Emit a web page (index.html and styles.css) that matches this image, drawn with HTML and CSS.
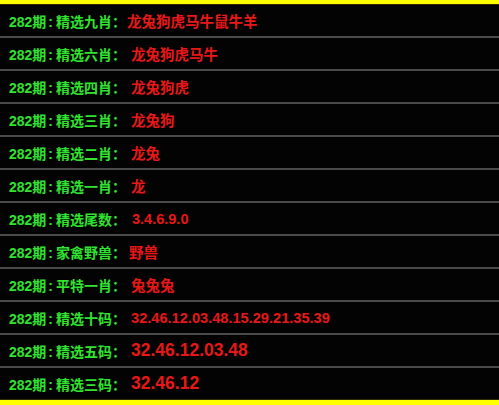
FILE: index.html
```html
<!DOCTYPE html>
<html lang="zh">
<head>
<meta charset="utf-8">
<link rel="stylesheet" href="styles.css">
</head>
<body>
<div class="board">
  <div class="inner">
    <div class="row"><span class="label">282期<span class="sep">:</span>精选九肖：</span><span class="val first">龙兔狗虎马牛鼠牛羊</span></div>
    <div class="row"><span class="label">282期<span class="sep">:</span>精选六肖：</span><span class="val">龙兔狗虎马牛</span></div>
    <div class="row"><span class="label">282期<span class="sep">:</span>精选四肖：</span><span class="val">龙兔狗虎</span></div>
    <div class="row"><span class="label">282期<span class="sep">:</span>精选三肖：</span><span class="val">龙兔狗</span></div>
    <div class="row"><span class="label">282期<span class="sep">:</span>精选二肖：</span><span class="val">龙兔</span></div>
    <div class="row"><span class="label">282期<span class="sep">:</span>精选一肖：</span><span class="val">龙</span></div>
    <div class="row"><span class="label">282期<span class="sep">:</span>精选尾数：</span><span class="val wide">3.4.6.9.0</span></div>
    <div class="row"><span class="label">282期<span class="sep">:</span>家禽野兽：</span><span class="val tight">野兽</span></div>
    <div class="row"><span class="label">282期<span class="sep">:</span>平特一肖：</span><span class="val">兔兔兔</span></div>
    <div class="row"><span class="label">282期<span class="sep">:</span>精选十码：</span><span class="val num">32.46.12.03.48.15.29.21.35.39</span></div>
    <div class="row"><span class="label">282期<span class="sep">:</span>精选五码：</span><span class="val big">32.46.12.03.48</span></div>
    <div class="row last"><span class="label">282期<span class="sep">:</span>精选三码：</span><span class="val big">32.46.12</span></div>
  </div>
</div>
</body>
</html>
```

FILE: styles.css
```css
html, body {
  margin: 0;
  padding: 0;
  background: #000;
}
.board {
  width: 499px;
  height: 405px;
  box-sizing: border-box;
  border-top: 4px solid #ffff00;
  border-bottom: 5px solid #ffff00;
  background: #030303;
  font-family: "Liberation Sans", "Noto Sans CJK SC", sans-serif;
  font-weight: bold;
}
.inner {
  border-top: 1px solid #2c2c00;
  border-bottom: 1px solid #2c2c00;
}
.row {
  height: 31px;
  display: flex;
  align-items: center;
  padding-left: 9px;
  border-bottom: 2px solid #4a4a4a;
  white-space: nowrap;
}
.row.last {
  border-bottom: none;
}
.label {
  color: #30e430;
  font-size: 14px;
}
.sep {
  margin: 0 3px 0 2px;
}
.val {
  color: #e81818;
  font-size: 14.5px;
  margin-left: 5px;
}
.val.first {
  margin-left: 1px;
}
.val.tight {
  margin-left: 3px;
}
.val.wide {
  margin-left: 6px;
}
.val.num {
  font-size: 14.6px;
}
.val.big {
  font-size: 17.5px;
}
```
